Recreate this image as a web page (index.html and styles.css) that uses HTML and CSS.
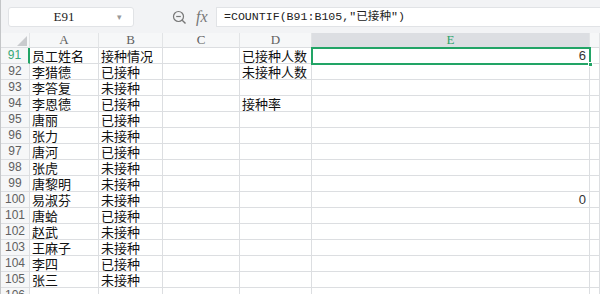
FILE: index.html
```html
<!DOCTYPE html>
<html lang="zh">
<head>
<meta charset="UTF-8">
<title>接种统计</title>
<link rel="stylesheet" href="styles.css">
</head>
<body>
<div class="app">
  <div class="toolbar">
    <div class="namebox">
      <span class="name">E91</span>
      <span class="caret">&#9662;</span>
    </div>
    <div class="tools">
      <svg class="zoom" width="15" height="15" viewBox="0 0 15 15">
        <circle cx="6.5" cy="6.5" r="5" fill="none" stroke="#777" stroke-width="1.2"/>
        <line x1="4.2" y1="6.5" x2="8.8" y2="6.5" stroke="#777" stroke-width="1.2"/>
        <line x1="10.2" y1="10.2" x2="13.5" y2="13.5" stroke="#777" stroke-width="1.4"/>
      </svg>
      <span class="fx">fx</span>
    </div>
    <div class="formula">=COUNTIF(B91:B105,"已接种")</div>
  </div>

  <div class="sheet">
    <div class="row head">
      <div class="corner">
        <svg width="10" height="10" viewBox="0 0 10 10"><polygon points="10,0 10,10 0,10" fill="#c9cbce"/></svg>
      </div>
      <div>A</div><div>B</div><div>C</div><div>D</div><div class="cur">E</div><div></div>
    </div>

    <div class="row"><div class="num cur">91</div><div>员工姓名</div><div>接种情况</div><div></div><div>已接种人数</div><div class="val">6</div><div></div></div>
    <div class="row"><div class="num">92</div><div>李猎德</div><div>已接种</div><div></div><div>未接种人数</div><div></div><div></div></div>
    <div class="row"><div class="num">93</div><div>李答复</div><div>未接种</div><div></div><div></div><div></div><div></div></div>
    <div class="row"><div class="num">94</div><div>李恩德</div><div>已接种</div><div></div><div>接种率</div><div></div><div></div></div>
    <div class="row"><div class="num">95</div><div>唐丽</div><div>已接种</div><div></div><div></div><div></div><div></div></div>
    <div class="row"><div class="num">96</div><div>张力</div><div>未接种</div><div></div><div></div><div></div><div></div></div>
    <div class="row"><div class="num">97</div><div>唐河</div><div>已接种</div><div></div><div></div><div></div><div></div></div>
    <div class="row"><div class="num">98</div><div>张虎</div><div>未接种</div><div></div><div></div><div></div><div></div></div>
    <div class="row"><div class="num">99</div><div>唐黎明</div><div>未接种</div><div></div><div></div><div></div><div></div></div>
    <div class="row"><div class="num">100</div><div>易淑芬</div><div>未接种</div><div></div><div></div><div class="val">0</div><div></div></div>
    <div class="row"><div class="num">101</div><div>唐蛤</div><div>已接种</div><div></div><div></div><div></div><div></div></div>
    <div class="row"><div class="num">102</div><div>赵武</div><div>未接种</div><div></div><div></div><div></div><div></div></div>
    <div class="row"><div class="num">103</div><div>王麻子</div><div>未接种</div><div></div><div></div><div></div><div></div></div>
    <div class="row"><div class="num">104</div><div>李四</div><div>已接种</div><div></div><div></div><div></div><div></div></div>
    <div class="row"><div class="num">105</div><div>张三</div><div>未接种</div><div></div><div></div><div></div><div></div></div>
    <div class="row"><div class="num">106</div><div></div><div></div><div></div><div></div><div></div><div></div></div>

    <div class="selection"><span class="handle"></span></div>
  </div>
</div>
</body>
</html>
```

FILE: styles.css
```css
*{
  margin: 0;
  padding: 0;
  box-sizing: border-box;
}

body{
  background: #fff;
  font-family: "Noto Sans CJK SC", sans-serif;
  overflow: hidden;
}

.app{
  width: 600px;
  height: 294px;
  border-left: 1px solid #c4c6c8;
  overflow: hidden;
}

/* formula bar */
.toolbar{
  height: 33px;
  background: #f2f3f5;
  display: flex;
  align-items: flex-start;
  padding-top: 7px;
}

.namebox{
  margin-left: 7px;
  width: 126px;
  height: 20px;
  background: #fff;
  border: 1px solid #e1e3e6;
  border-radius: 3px;
  display: flex;
  align-items: center;
}

.name{
  flex: 1;
  text-align: center;
  font-family: "Liberation Serif", serif;
  font-size: 13px;
  color: #222;
  padding-left: 2px;
}

.caret{
  width: 16px;
  font-size: 9px;
  color: #999;
  font-family: "DejaVu Sans", sans-serif;
}

.tools{
  width: 82px;
  height: 20px;
  display: flex;
  align-items: center;
  padding-left: 38px;
  gap: 9px;
}

.fx{
  font-family: "Liberation Serif", serif;
  font-style: italic;
  font-size: 16px;
  color: #777;
  line-height: 20px;
}

.formula{
  flex: 1;
  height: 20px;
  background: #fff;
  border: 1px solid #e1e3e6;
  border-right: none;
  padding-left: 7px;
  font-family: "Liberation Mono", "Noto Sans CJK SC", monospace;
  font-size: 11.6px;
  line-height: 18px;
  color: #222;
}

/* grid */
.sheet{
  position: relative;
}

.row{
  display: grid;
  grid-template-columns: 29px 69px 64px 77px 72px 278px 1fr;
  height: 16px;
}

.row > div{
  border-right: 1px solid #dcdee1;
  border-bottom: 1px solid #dcdee1;
  font-size: 13px;
  line-height: 15px;
  padding-left: 2px;
  white-space: nowrap;
  color: #111;
}

.row.head{
  height: 15px;
}

.row.head > div{
  background: #f6f7f8;
  text-align: center;
  padding-left: 0;
  font-family: "Liberation Serif", serif;
  font-size: 13px;
  line-height: 14px;
  color: #606060;
  border-right-color: #e2e4e6;
}

.row.head > .corner{
  position: relative;
}

.corner svg{
  position: absolute;
  right: 2px;
  bottom: 1px;
}

.row.head > .cur{
  background: #dcdee2;
  color: #2aa36a;
}

.row > .num{
  background: #f6f7f8;
  text-align: center;
  padding-left: 0;
  font-family: "Liberation Sans", sans-serif;
  font-size: 12px;
  color: #606060;
}

.row > .num.cur{
  color: #38a877;
  border-right: 2px solid #22a466;
}

.row > .val{
  text-align: right;
  padding-right: 3px;
  font-family: "Liberation Sans", sans-serif;
  font-size: 13px;
  color: #333;
}

.selection{
  position: absolute;
  left: 310px;
  top: 14px;
  width: 280px;
  height: 18px;
  border: 2px solid #22a466;
}

.handle{
  position: absolute;
  right: -4px;
  bottom: -4px;
  width: 5px;
  height: 5px;
  background: #22a466;
  border: 1px solid #fff;
}
```
